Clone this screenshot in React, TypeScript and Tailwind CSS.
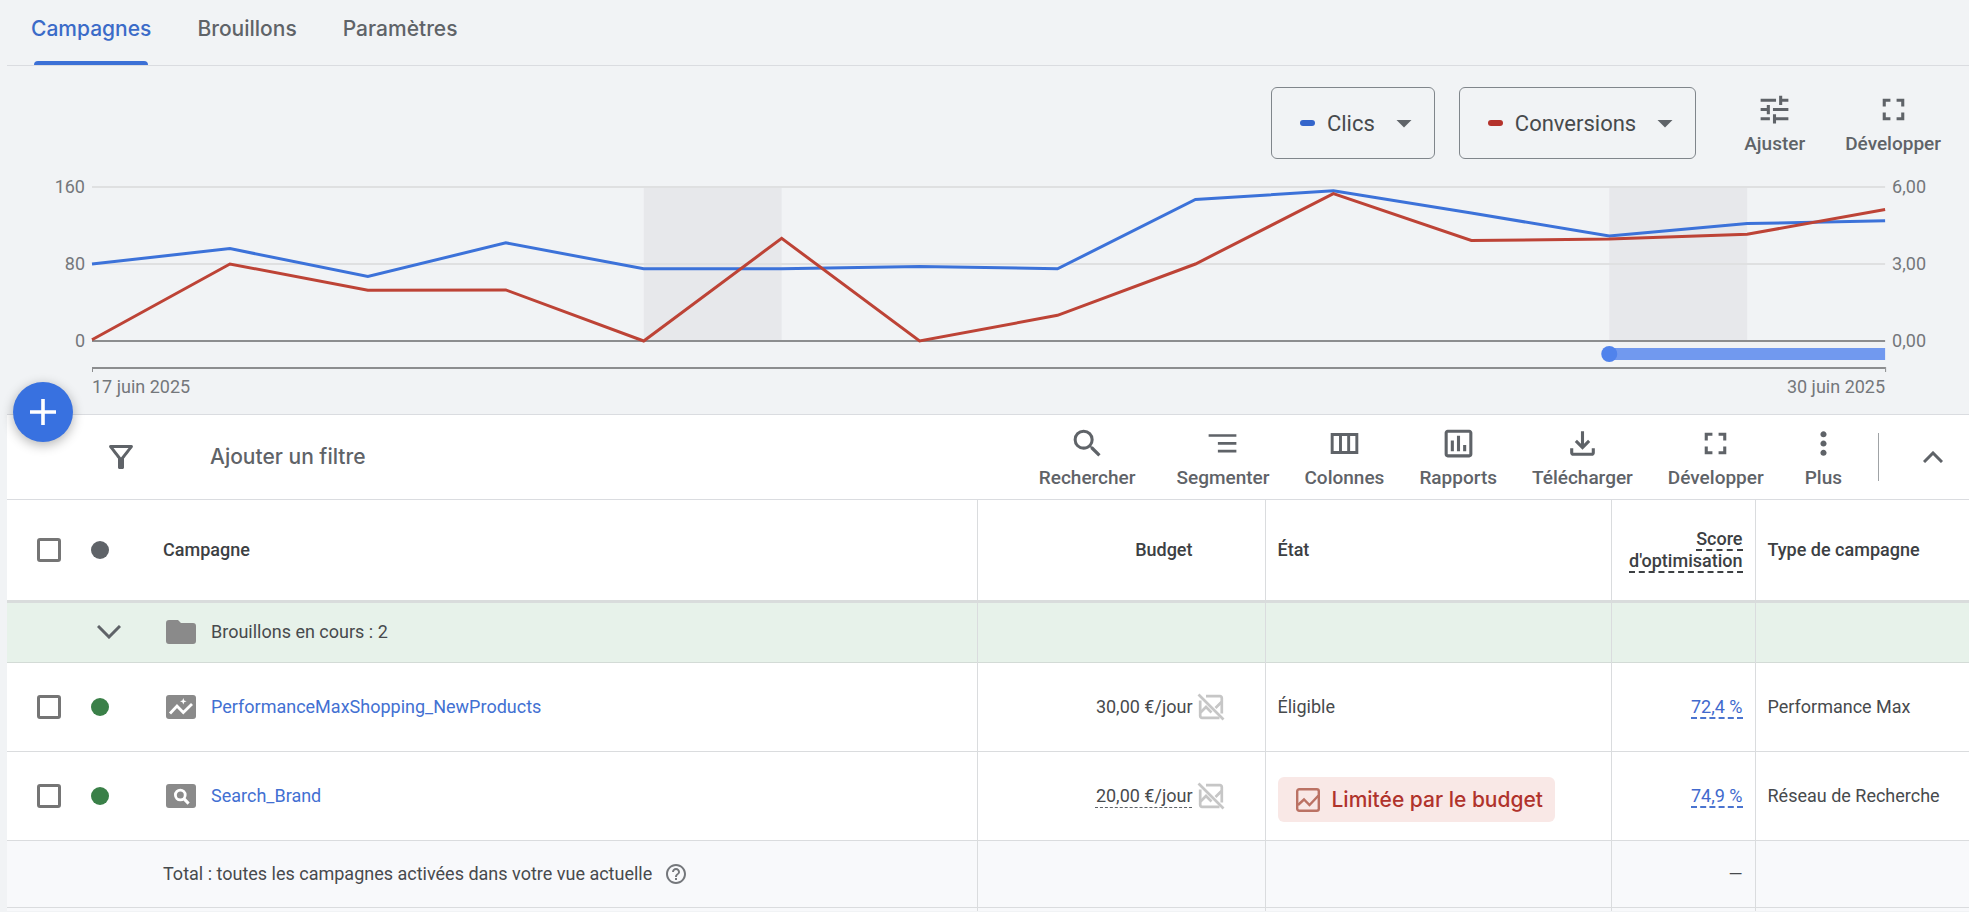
import { clsx } from 'clsx'
import type { ReactNode } from 'react'
import {
  MdArrowDropDown,
  MdFullscreen,
  MdHelpOutline,
  MdMoreVert,
  MdOutlineAssessment,
  MdOutlineFilterAlt,
  MdSearch,
  MdTune,
} from 'react-icons/md'

const TABS = ['Campagnes', 'Brouillons', 'Paramètres']

// One value per day, 17 to 30 June
const CLICKS = [80, 96, 67, 102, 75, 75, 77.5, 75, 147, 156, 133, 109, 122, 125]
const CONVERSIONS = [0.05, 3, 1.98, 1.99, 0, 4, 0, 1, 3, 5.74, 3.92, 3.97, 4.16, 5.12]
const LAST_DAY = CLICKS.length - 1
const PLOT_HEIGHT = 154

function percent(day: number) {
  return `${(day / LAST_DAY) * 100}%`
}

function toPoints(values: number[], max: number) {
  return values
    .map((value, day) => `${day},${PLOT_HEIGHT - (value / max) * PLOT_HEIGHT}`)
    .join(' ')
}

function SegmentIcon() {
  return (
    <svg viewBox="0 0 24 24" className="size-[37px]" fill="currentColor" aria-hidden="true">
      <path d="M3 6h18v1.7H3zM9 11.1h12v1.7H9zM9 16.1h12v1.7H9z" />
    </svg>
  )
}

function ColumnsIcon() {
  return (
    <svg viewBox="0 0 24 24" className="size-[37px]" fill="none" stroke="currentColor" strokeWidth="1.9" aria-hidden="true">
      <path d="M4 6.2h16v11.6H4zM9.4 6.2v11.6M14.7 6.2v11.6" />
    </svg>
  )
}

function DownloadIcon() {
  return (
    <svg viewBox="0 -960 960 960" className="size-[37px]" fill="currentColor" aria-hidden="true">
      <path d="M480-320 280-520l56-58 104 104v-326h80v326l104-104 56 58-200 200ZM240-160q-33 0-56.5-23.5T160-240v-120h80v120h480v-120h80v120q0 33-23.5 56.5T720-160H240Z" />
    </svg>
  )
}

function FolderIcon() {
  return (
    <svg viewBox="0 0 30 24" className="h-6 w-[30px]" fill="#8a8a8a" aria-hidden="true">
      <path d="M3 0h9l3 3h12a3 3 0 0 1 3 3v15a3 3 0 0 1-3 3H3a3 3 0 0 1-3-3V3a3 3 0 0 1 3-3z" />
    </svg>
  )
}

function PerformanceIcon() {
  return (
    <svg viewBox="0 0 30 24" className="h-6 w-[30px]" aria-hidden="true">
      <rect width="30" height="24" rx="3" fill="#8a8a8a" />
      <path d="M4 18.5l7-7.5 6.3 6.5L26 9" fill="none" stroke="#fff" strokeWidth="2.8" />
      <path d="M17.3 3l.9 2.4 2.4.9-2.4.9-.9 2.4-.9-2.4-2.4-.9 2.4-.9z" fill="#fff" />
    </svg>
  )
}

function SearchCampaignIcon() {
  return (
    <svg viewBox="0 0 30 24" className="h-6 w-[30px]" aria-hidden="true">
      <rect width="30" height="24" rx="3" fill="#8a8a8a" />
      <circle cx="14.3" cy="11" r="4.9" fill="none" stroke="#fff" strokeWidth="2.8" />
      <path d="M17.6 14.4l5 5.2" stroke="#fff" strokeWidth="3" />
    </svg>
  )
}

function BudgetChartOffIcon() {
  return (
    <svg viewBox="0 0 28 28" className="size-7" fill="none" stroke="#c6c6c6" strokeWidth="2.7" aria-hidden="true">
      <path d="M9 3.2h14a1.8 1.8 0 0 1 1.8 1.8v15.5M22.5 24.8H5a1.8 1.8 0 0 1-1.8-1.8V7.5" />
      <path d="M3.5 19.5L9 14l5.5 5.5M18.500 15l6-6" />
      <path d="M1.5 1.5l25 25" />
    </svg>
  )
}

function BudgetChartIcon() {
  return (
    <svg viewBox="0 0 24 24" className="size-6" fill="none" stroke="#bb7264" strokeWidth="2.4" aria-hidden="true">
      <rect x="1.2" y="1.2" width="21.6" height="21.6" rx="2" />
      <path d="M2 17l6-5.500 5.500 5.500L22.500 7.500" />
    </svg>
  )
}

function ToolButton({ label, children, className }: { label: string; children: ReactNode; className?: string }) {
  return (
    <button
      type="button"
      className={clsx('flex flex-col items-center text-[19px]/6 font-medium text-[#5f6368]', className)}
    >
      {children}
      <span className="mt-1">{label}</span>
    </button>
  )
}

function MetricSelect({ label, swatch }: { label: string; swatch: string }) {
  return (
    <button
      type="button"
      className="flex h-[72px] items-center rounded-md border border-[#80868b] pr-3 pl-7 text-[22px] text-[#474a4d]"
    >
      <span className={clsx('mr-3 h-1.5 w-[15px] rounded-full', swatch)} />
      {label}
      <MdArrowDropDown className="ml-[11px] size-9 text-[#5f6368]" />
    </button>
  )
}

function Chart() {
  return (
    <div className="flex pr-[43px] text-lg/6 text-[#74777b]">
      <div className="flex h-[178px] w-[78px] shrink-0 flex-col justify-between text-right">
        <span>160</span>
        <span>80</span>
        <span>0</span>
      </div>
      <div className="mx-[7px] mt-3 flex-1">
        <svg className="block h-[188px] w-full overflow-visible" role="img" aria-label="Clics et conversions">
          <rect x={percent(4)} width={percent(1)} height={PLOT_HEIGHT} fill="#e7e8eb" />
          <rect x={percent(11)} width={percent(1)} height={PLOT_HEIGHT} fill="#e7e8eb" />
          <rect width="100%" y="-1" height="2" fill="#dfe0e1" />
          <rect width="100%" y="76" height="2" fill="#dfe0e1" />
          <rect width="100%" y="153" height="2" fill="#8c8d8f" />
          <svg
            width="100%"
            height={PLOT_HEIGHT}
            viewBox={`0 0 ${LAST_DAY} ${PLOT_HEIGHT}`}
            preserveAspectRatio="none"
            className="overflow-visible"
            fill="none"
            strokeWidth="3"
          >
            <polyline points={toPoints(CLICKS, 160)} stroke="#3c72d9" vectorEffect="non-scaling-stroke" />
            <polyline points={toPoints(CONVERSIONS, 6)} stroke="#bd4336" vectorEffect="non-scaling-stroke" />
          </svg>
          <rect x={percent(11)} y="161" width={percent(2)} height="12" fill="#7199ef" />
          <circle cx={percent(11)} cy="167" r="8" fill="#5083ec" />
          <rect y="180" width="100%" height="2" fill="#8c8d8f" />
          <rect y="180" width="1" height="5" fill="#8c8d8f" />
          <rect x="100%" y="180" width="1" height="5" fill="#8c8d8f" />
        </svg>
        <div className="flex justify-between">
          <span>17 juin 2025</span>
          <span>30 juin 2025</span>
        </div>
      </div>
      <div className="flex h-[178px] flex-col justify-between">
        <span>6,00</span>
        <span>3,00</span>
        <span>0,00</span>
      </div>
    </div>
  )
}

function Checkbox({ label }: { label: string }) {
  return (
    <input
      type="checkbox"
      aria-label={label}
      className="block size-6 appearance-none rounded-[3px] border-3 border-[#757575] bg-white checked:bg-[#757575]"
    />
  )
}

type Campaign = {
  name: string
  icon: ReactNode
  budget: string
  limited: boolean
  score: string
  type: string
}

const CAMPAIGNS: Campaign[] = [
  {
    name: 'PerformanceMaxShopping_NewProducts',
    icon: <PerformanceIcon />,
    budget: '30,00 €/jour',
    limited: false,
    score: '72,4 %',
    type: 'Performance Max',
  },
  {
    name: 'Search_Brand',
    icon: <SearchCampaignIcon />,
    budget: '20,00 €/jour',
    limited: true,
    score: '74,9 %',
    type: 'Réseau de Recherche',
  },
]

const CELL = 'border-l border-[#dadcde]'

function CampaignRow({ campaign }: { campaign: Campaign }) {
  return (
    <tr className="h-[89px] border-b border-[#dadcde]">
      <td className="pl-[30px]">
        <Checkbox label={campaign.name} />
      </td>
      <td className="pl-2">
        <span className="block size-[18px] rounded-full bg-[#3a8048]" />
      </td>
      <td className="pl-2.5">
        <div className="flex items-center gap-[15px]">
          {campaign.icon}
          <a href="#" className="text-[#4270d2]">
            {campaign.name}
          </a>
        </div>
      </td>
      <td className={CELL}>
        <div className="flex items-center justify-end gap-1 pr-10">
          <span
            className={clsx(
              campaign.limited && 'underline decoration-[#5f6368] decoration-dashed decoration-1 underline-offset-5',
            )}
          >
            {campaign.budget}
          </span>
          <BudgetChartOffIcon />
        </div>
      </td>
      <td className={clsx(CELL, 'pl-3')}>
        {campaign.limited ? (
          <div className="pt-2">
            <span className="inline-flex h-[45px] items-center gap-3 rounded-md bg-[#f9e8e6] pr-3 pl-[18px] align-middle font-['Inter',sans-serif] text-[21px] font-medium text-[#b0332c]">
              <BudgetChartIcon />
              Limitée par le budget
            </span>
          </div>
        ) : (
          'Éligible'
        )}
      </td>
      <td className={clsx(CELL, 'pr-3 text-right')}>
        <a href="#" className="border-b-2 border-dashed border-[#4a74cf] text-[#4169cd]">
          {campaign.score}
        </a>
      </td>
      <td className={clsx(CELL, 'pl-3')}>{campaign.type}</td>
    </tr>
  )
}

function CampaignTable() {
  return (
    <table className="w-full table-fixed border-collapse text-left text-lg/[22px] text-[#474a4d]">
      <colgroup>
        <col className="w-[76px]" />
        <col className="w-[73px]" />
        <col />
        <col className="w-[288px]" />
        <col className="w-[346px]" />
        <col className="w-[144px]" />
        <col className="w-[214px]" />
      </colgroup>
      <thead>
        <tr className="h-[101px] border-b-3 border-[#d9dcdc] text-[#3c4043]">
          <th className="pl-[30px]">
            <Checkbox label="Toutes les campagnes" />
          </th>
          <th className="pl-2">
            <span className="block size-[18px] rounded-full bg-[#5f6368]" />
          </th>
          <th className="pl-[7px] font-medium">Campagne</th>
          <th className={clsx(CELL, 'pr-[72px] text-right font-medium')}>Budget</th>
          <th className={clsx(CELL, 'pl-3 font-medium')}>État</th>
          <th className={clsx(CELL, 'pr-3 text-right font-medium')}>
            <span className="border-b-2 border-dashed border-[#3c4043]">Score d'optimisation</span>
          </th>
          <th className={clsx(CELL, 'pl-3 font-medium')}>Type de campagne</th>
        </tr>
      </thead>
      <tbody>
        <tr className="h-[61px] border-b border-[#d3dbd6] bg-[#e7f2ea]">
          <td />
          <td className="pl-3.5">
            <button type="button" aria-label="Afficher les brouillons" className="block text-[#5f6368]">
              <svg viewBox="0 0 24 14" className="h-3.5 w-6" fill="none" stroke="currentColor" strokeWidth="3">
                <path d="M1 1l11 11L23 1" />
              </svg>
            </button>
          </td>
          <td className="pl-2.5">
            <div className="flex items-center gap-[15px]">
              <FolderIcon />
              Brouillons en cours : 2
            </div>
          </td>
          <td className={CELL} />
          <td className={CELL} />
          <td className={CELL} />
          <td className={CELL} />
        </tr>
        {CAMPAIGNS.map((campaign) => (
          <CampaignRow key={campaign.name} campaign={campaign} />
        ))}
        <tr className="h-[67px] border-b border-[#dadcde] bg-[#f8f9fb]">
          <td />
          <td />
          <td className="pl-[7px]">
            <div className="flex items-center gap-3">
              Total : toutes les campagnes activées dans votre vue actuelle
              <MdHelpOutline className="size-6 text-[#74777b]" />
            </div>
          </td>
          <td className={CELL} />
          <td className={CELL} />
          <td className={clsx(CELL, 'pr-3 text-right')}>—</td>
          <td className={CELL} />
        </tr>
        <tr className="h-1 bg-[#f8f9fb]">
          <td />
          <td />
          <td />
          <td className={CELL} />
          <td className={CELL} />
          <td className={CELL} />
          <td className={CELL} />
        </tr>
      </tbody>
    </table>
  )
}

export default function App() {
  return (
    <div className="min-h-screen bg-[#f1f3f5] pl-[7px] font-['Roboto',sans-serif]">
      <nav className="flex gap-[46px] border-b border-[#dadce0] pl-6 font-['Inter',sans-serif] text-[21px]/7 font-medium">
        {TABS.map((tab, index) => (
          <a
            key={tab}
            href="#"
            className={clsx('flex flex-col pt-[15px]', index === 0 ? 'text-[#3b6bc8]' : 'text-[#5f6368]')}
          >
            {tab}
            <span className={clsx('mx-[3px] mt-[18px] h-1 rounded-t', index === 0 && 'bg-[#3c70d6]')} />
          </a>
        ))}
      </nav>

      <section className="pb-[15px]">
        <div className="flex items-center justify-end pt-[21px] pr-7">
          <div className="mr-12 flex gap-6">
            <MetricSelect label="Clics" swatch="bg-[#3465cb]" />
            <MetricSelect label="Conversions" swatch="bg-[#b4322b]" />
          </div>
          <div className="flex gap-10">
            <ToolButton label="Ajuster">
              <MdTune className="size-[37px]" />
            </ToolButton>
            <ToolButton label="Développer">
              <MdFullscreen className="size-[37px]" />
            </ToolButton>
          </div>
        </div>
        <div className="mt-4">
          <Chart />
        </div>
      </section>

      <main className="bg-white">
        <div className="relative flex h-[86px] items-center border-y border-[#dadce0] pr-[18px]">
          <button
            type="button"
            aria-label="Créer une campagne"
            className="absolute -top-[33px] left-1.5 flex size-[60px] items-center justify-center rounded-full bg-[#3871e0] text-white shadow-[0_3px_12px_rgba(0,0,0,0.3)]"
          >
            <svg viewBox="0 0 26 26" className="size-[26px]" stroke="currentColor" strokeWidth="3.6">
              <path d="M13 0v26M0 13h26" />
            </svg>
          </button>
          <MdOutlineFilterAlt className="ml-24 size-9 text-[#5f6368]" />
          <input
            type="text"
            aria-label="Ajouter un filtre"
            placeholder="Ajouter un filtre"
            className="ml-[71px] min-w-0 flex-1 font-['Inter',sans-serif] text-[21px] font-medium outline-none placeholder:text-[#5f6368]"
          />
          <div className="flex gap-[35px]">
            <ToolButton label="Rechercher" className="mr-1.5">
              <MdSearch className="size-[37px]" />
            </ToolButton>
            <ToolButton label="Segmenter">
              <SegmentIcon />
            </ToolButton>
            <ToolButton label="Colonnes">
              <ColumnsIcon />
            </ToolButton>
            <ToolButton label="Rapports">
              <MdOutlineAssessment className="size-[37px]" />
            </ToolButton>
            <ToolButton label="Télécharger">
              <DownloadIcon />
            </ToolButton>
            <ToolButton label="Développer">
              <MdFullscreen className="size-[37px]" />
            </ToolButton>
            <ToolButton label="Plus" className="ml-1.5">
              <MdMoreVert className="size-[37px]" />
            </ToolButton>
          </div>
          <span className="ml-9 h-12 w-px bg-[#a0a3a6]" />
          <button type="button" aria-label="Réduire" className="ml-9 flex size-9 items-center justify-center text-[#5f6368]">
            <svg viewBox="0 0 20 12" className="h-3 w-5" fill="none" stroke="currentColor" strokeWidth="3">
              <path d="M1 11l9-9 9 9" />
            </svg>
          </button>
        </div>
        <CampaignTable />
      </main>
    </div>
  )
}
